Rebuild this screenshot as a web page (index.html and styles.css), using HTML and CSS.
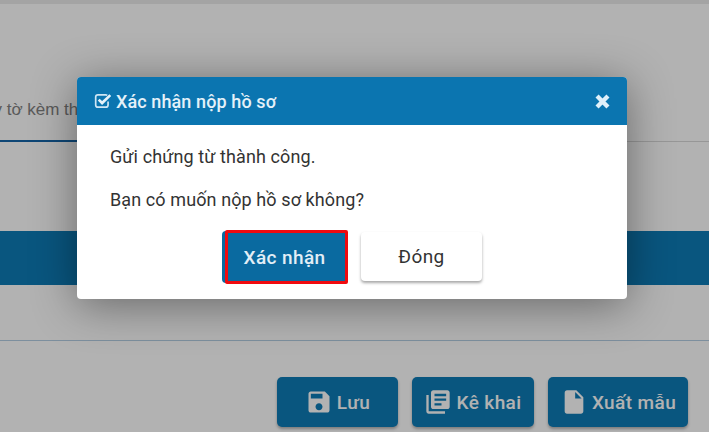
FILE: index.html
```html
<!DOCTYPE html>
<html lang="vi">
<head>
<meta charset="utf-8">
<title>Xác nhận nộp hồ sơ</title>
<link rel="stylesheet" href="styles.css">
</head>
<body>
<div class="page">
  <div class="topbar"></div>
  <div class="tabs"><div class="tab">Giấy tờ kèm theo</div></div>
  <div class="band"></div>
  <div class="footer">
    <button class="action">
      <svg class="mi" viewBox="0 0 24 24"><path d="M17 3H5c-1.11 0-2 .9-2 2v14c0 1.1.89 2 2 2h14c1.1 0 2-.9 2-2V7l-4-4zm-5 16c-1.66 0-3-1.34-3-3s1.34-3 3-3 3 1.34 3 3-1.34 3-3 3zm3-10H5V5h10v4z"/></svg>Lưu
    </button>
    <button class="action">
      <svg class="mi" viewBox="0 0 24 24"><path d="M4 6H2v14c0 1.1.9 2 2 2h14v-2H4V6zm16-4H8c-1.1 0-2 .9-2 2v12c0 1.1.9 2 2 2h12c1.1 0 2-.9 2-2V4c0-1.1-.9-2-2-2zm-1 9H9V9h10v2zm-4 4H9v-2h6v2zm4-8H9V5h10v2z"/></svg>Kê khai
    </button>
    <button class="action">
      <svg class="mi" viewBox="0 0 24 24"><path d="M6 2c-1.1 0-1.99.9-1.99 2L4 20c0 1.1.89 2 1.99 2H18c1.1 0 2-.9 2-2V8l-6-6H6zm7 7V3.5L18.5 9H13z"/></svg>Xuất mẫu
    </button>
  </div>
  <div class="backdrop"></div>
  <div class="modal">
    <div class="modal-head">
      <div class="modal-title">
        <svg class="check" viewBox="0 0 16 16"><path class="box" d="M12.500 8.500v3c0 1.200-.8 2-2 2H3.500c-1.200 0-2-.8-2-2V4.500c0-1.200.8-2 2-2h7c.5 0 .9.100 1.300.300"/><path class="tick" d="M4.200 6.800l3 3L14.500 2.800"/></svg>Xác nhận nộp hồ sơ
      </div>
      <svg class="close" viewBox="0 0 14 14"><path d="M2.500 2.500l9 9M11.500 2.500l-9 9"/></svg>
    </div>
    <div class="modal-body">
      <p class="msg">Gửi chứng từ thành công.</p>
      <p class="msg">Bạn có muốn nộp hồ sơ không?</p>
      <div class="modal-actions">
        <button class="btn primary">Xác nhận<span class="marker"></span></button>
        <button class="btn plain">Đóng</button>
      </div>
    </div>
  </div>
</div>
</body>
</html>
```
FILE: styles.css
```css
* { box-sizing: border-box; }
html, body { margin: 0; padding: 0; }
body { font-family: Roboto, "Liberation Sans", sans-serif; background: #fff; }
.page { position: relative; width: 709px; height: 432px; overflow: hidden; background: #fff; }
.topbar { height: 4px; background: #ebebeb; }
.tabs { height: 138px; border-bottom: 1px solid #d8d8d8; display: flex; align-items: flex-end; }
.tab { width: 110px; margin-left: -33px; height: 41px; margin-bottom: -1px; white-space: nowrap; border-bottom: 2px solid #1565a8; color: #828282; font: 17px/18px "Liberation Sans", sans-serif; }
.band { height: 54px; margin-top: 89px; background: #0e7cb7; }
.footer { height: 92px; margin-top: 55px; border-top: 1px solid #b4cde2; padding: 36px 21px 0 0; display: flex; justify-content: flex-end; gap: 14px; }
.action { height: 50px; display: flex; align-items: center; justify-content: center; gap: 4px; border: 0; border-radius: 5px; background: #0e7cb7; color: #fff; font: 500 19px Roboto, sans-serif; letter-spacing: .4px; box-shadow: 0 2px 3px rgba(0,0,0,.3); padding: 0; }
.action:nth-child(1) { width: 121px; }
.action:nth-child(2) { width: 122px; }
.action:nth-child(3) { width: 140px; }
.mi { width: 28px; height: 28px; fill: #fff; }
.backdrop { position: absolute; inset: 0; background: rgba(0,0,0,.3); }
.modal { position: absolute; left: 77px; top: 77px; width: 550px; height: 222px; background: #fff; border-radius: 4px; box-shadow: 0 6px 45px rgba(0,0,0,.42); overflow: hidden; }
.modal-head { height: 48px; background: #0b75b0; color: #fff; display: flex; align-items: center; justify-content: space-between; padding: 0 16px 0 17px; }
.modal-title { display: flex; align-items: center; gap: 4px; font: 500 18px Roboto, sans-serif; letter-spacing: .1px; color: #e4f1f9; }
.check { width: 18px; height: 18px; fill: none; stroke: #cfe6f4; stroke-width: 1.5; }
.tick { stroke-width: 2.4; stroke: #e4f1f9; }
.close { width: 17px; height: 17px; fill: none; stroke: #dff0fa; stroke-width: 3.6; }
.modal-body { padding: 21px 0 0 33px; }
.msg { margin: 0 0 22px; font: 400 18px/21px Roboto, sans-serif; color: #333; letter-spacing: .1px; }
.modal-actions { display: flex; align-items: flex-start; gap: 14px; margin: -1px 0 0 112px; }
.btn { height: 52px; border: 0; border-radius: 4px; font: 500 19px Roboto, sans-serif; letter-spacing: .4px; padding: 0; }
.primary { position: relative; width: 125px; background: #0a6aa0; color: #e2eef6; }
.marker { position: absolute; left: 3px; top: -1px; right: -1px; bottom: -1px; border: 3px solid #f00a0f; border-radius: 2px; }
.plain { width: 121px; height: 49px; margin-top: 1px; background: #fff; color: #333; font-weight: 400; box-shadow: 0 2px 3px rgba(0,0,0,.35); }
```
